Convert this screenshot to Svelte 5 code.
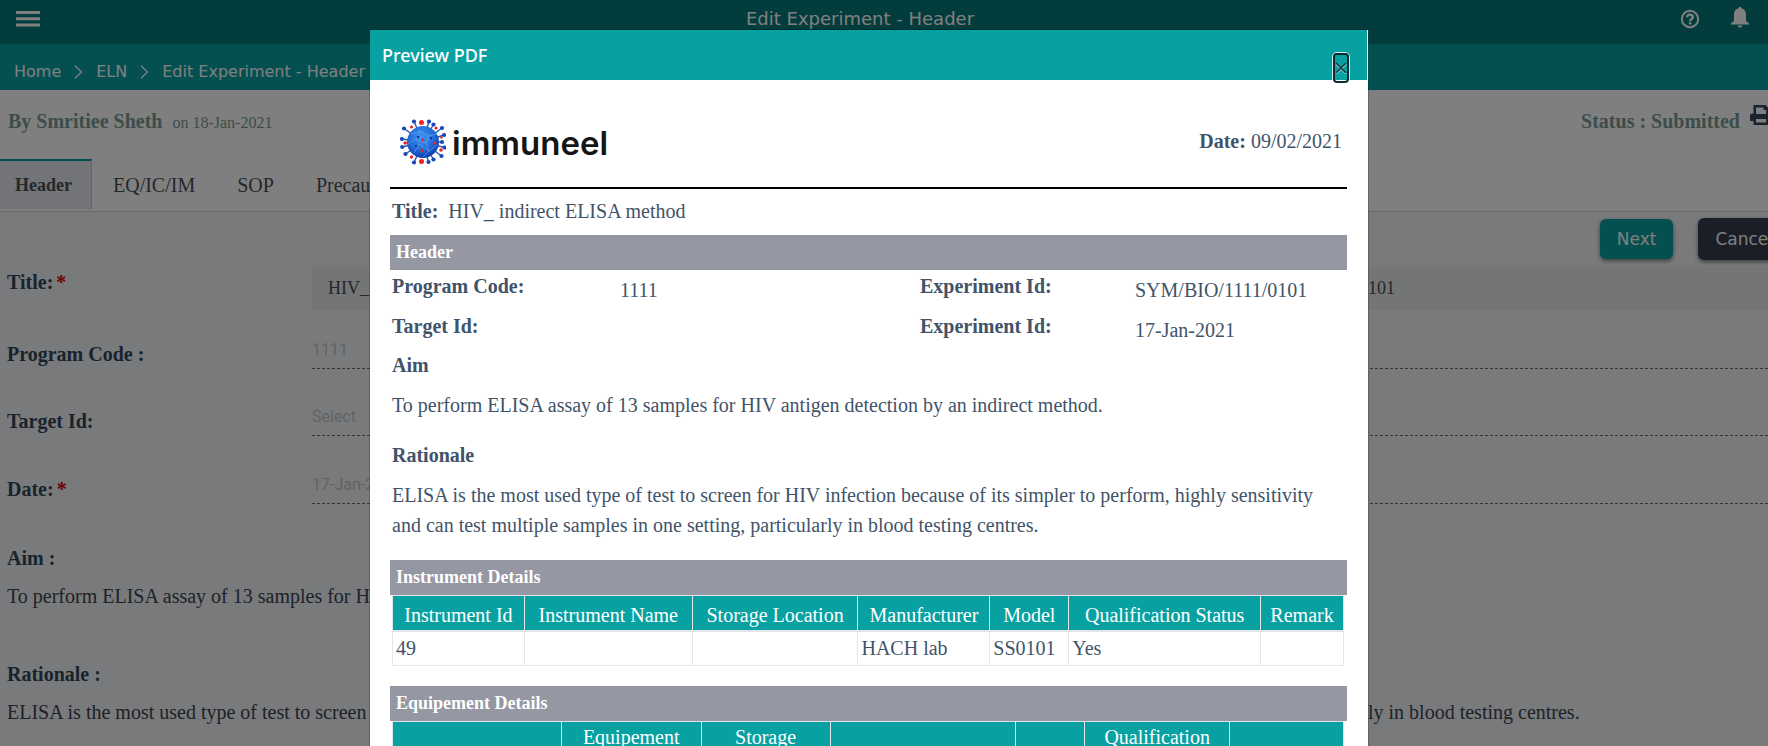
<script>
  const tabs = ['Header', 'EQ/IC/IM', 'SOP', 'Precautions'];

  const instrument = {
    widths: [132, 168, 166, 132, 79, 192, 83],
    heads: ['Instrument Id', 'Instrument Name', 'Storage Location', 'Manufacturer', 'Model', 'Qualification Status', 'Remark'],
    row: ['49', '', '', 'HACH lab', 'SS0101', 'Yes', '']
  };
  const equipment = {
    widths: [169, 140, 129, 186, 69, 145, 114],
    heads: ['Equipement Id', 'Equipement Name', 'Storage Location', 'Manufacturer', 'Model', 'Qualification Status', 'Remark']
  };

  const spikes = [
    [14, 2.5], [29, 2.5], [4, 9.5], [33.5, 5.5], [42, 9], [2, 20], [44, 16], [42, 23],
    [2.2, 28], [44.5, 28.5], [5.5, 35], [41.5, 37], [14, 43.5], [28.5, 43], [33.5, 40.5]
  ];
  const redDots = [
    [21.5, 3.5, 2.5], [21.5, 42.5, 2.5], [11.5, 8, 1.6], [36, 9, 1.6], [5.2, 24, 1.8],
    [41, 31, 1.8], [11.5, 38, 1.7], [41.5, 18.5, 1.2], [22.5, 21, 1.4], [35, 24, 1.5], [22, 31.5, 1.4]
  ];
</script>

<div class="page">
  <header class="topbar">
    <button class="icon" aria-label="Menu">
      <svg width="24" height="16" viewBox="0 0 24 16" fill="#fff"><path d="M0 0h24v3H0zM0 6.3h24v3H0zM0 12.6h24v3H0z" /></svg>
    </button>
    <h1>Edit Experiment - Header</h1>
    <div class="tools">
      <button class="icon" aria-label="Help">
        <svg width="20" height="20" viewBox="0 0 20 20" fill="none" stroke="#fff" stroke-width="2"><circle cx="10" cy="10" r="8.2" /><path d="M7.1 8.2c0-3.600 5.700-3.400 5.700 0 0 1.800-2.700 1.900-2.700 4" stroke-width="2.4" /><circle cx="10.1" cy="14.300" r=".7" stroke-width="1.4" /></svg>
      </button>
      <button class="icon bell" aria-label="Notifications">
        <svg width="20" height="22" viewBox="0 0 20 22" fill="#fff"><path d="M8.6 2.2a1.4 1.4 0 0 1 2.8 0C14.8 3 16 5.500 16 9v5.500c0 1.600 3.300 2 3.300 4H.7c0-2 3.300-2.400 3.300-4V9c0-3.500 1.200-6 4.600-6.800zM7.700 19.500h4.600a2.300 2 0 0 1-4.600 0z" /></svg>
      </button>
    </div>
  </header>

  <nav class="crumbs" aria-label="Breadcrumb">
    <a href="#home">Home</a>
    <svg width="9" height="14" viewBox="0 0 9 14" fill="none" stroke="#fff" stroke-width="1.3"><path d="M1 .8 7.500 7 1 13.200" /></svg>
    <a href="#eln">ELN</a>
    <svg width="9" height="14" viewBox="0 0 9 14" fill="none" stroke="#fff" stroke-width="1.3"><path d="M1 .8 7.500 7 1 13.200" /></svg>
    <span>Edit Experiment - Header</span>
  </nav>

  <div class="byline">
    <p><b>By Smritiee Sheth</b> <small>on 18-Jan-2021</small></p>
    <div class="status">
      <b>Status : Submitted</b>
      <button class="icon" aria-label="Print">
        <svg width="22" height="20" viewBox="0 0 22 20"><path fill="#34495e" fill-rule="evenodd" d="M3.500 0h12l3 3v5.500H20a2 2 0 0 1 2 2V16h-3.500v4h-15v-4H0v-5.500a2 2 0 0 1 2-2h1.500zM6 2.500V9h10V5h-2.500V2.500zM6 14v3.500h10V14z" /></svg>
      </button>
    </div>
  </div>

  <div class="tabs" role="tablist">
    {#each tabs as tab, i}
      <button role="tab" aria-selected={i === 0} class:active={i === 0}>{tab}</button>
    {/each}
  </div>

  <main>
    <div class="actions">
      <button class="next">Next</button>
      <button class="cancel">Cancel</button>
    </div>
    <div class="fields">
      <label for="title">Title:<i>*</i></label>
      <input id="title" class="filled" value="HIV_ indirect ELISA method" readonly />
      <input class="filled second" aria-label="Experiment Id" value="SYM/BIO/1111/0101" readonly />

      <label for="program">Program Code :</label>
      <input id="program" placeholder="1111" />
      <input aria-label="Program" />

      <label for="target">Target Id:</label>
      <input id="target" placeholder="Select" />
      <input aria-label="Target" />

      <label for="date">Date:<i>*</i></label>
      <input id="date" placeholder="17-Jan-2021" />
      <input aria-label="End date" />
    </div>
    <section class="note">
      <h2>Aim :</h2>
      <p>To perform ELISA assay of 13 samples for HIV antigen detection by an indirect method.</p>
    </section>
    <section class="note">
      <h2>Rationale :</h2>
      <p>ELISA is the most used type of test to screen for HIV infection because of its simpler to perform, highly sensitivity and can test multiple samples in one setting, particularly in blood testing centres.</p>
    </section>
  </main>
</div>

<div class="backdrop">
  <div class="modal" role="dialog" aria-modal="true" aria-labelledby="dialog-title">
    <div class="modal-head">
      <h2 id="dialog-title">Preview PDF</h2>
      <button class="close" aria-label="Close">
        <svg width="12" height="12" viewBox="0 0 12 12" fill="none" aria-hidden="true">
          <path d="M1 2l10 10M11 2L1 12" stroke="#b5dcde" stroke-width="1.500" />
          <path d="M1 1l10 10M11 1L1 11" stroke="#12343a" stroke-width="1.500" />
        </svg>
      </button>
    </div>
    <div class="sheet">
      <div class="brand">
        <div class="logo">
          <svg width="46" height="46" viewBox="0 0 46 46" aria-hidden="true">
            <defs>
              <radialGradient id="ball" cx=".45" cy=".35" r=".65">
                <stop offset="0" stop-color="#3f95f2" /><stop offset=".6" stop-color="#246bd8" /><stop offset="1" stop-color="#0c3fae" />
              </radialGradient>
            </defs>
            {#each spikes as [x, y]}
              <line x1="23" y1="23" x2={x} y2={y} stroke="#2458bd" stroke-width="1.400" />
              <circle cx={x} cy={y} r="2.100" fill="#1748b8" />
            {/each}
            <circle cx="23" cy="23" r="16" fill="url(#ball)" />
            <path d="M11 15l9-3 8 5 9-2M8 25l8-5 10 4 6-7M14 34l5-9 10 7 8-6M20 12l-4 8M28 17l-2 7 3 8-6 6" fill="none" stroke="#6fb0ee" stroke-width=".7" opacity=".8" />
            <circle cx="18" cy="18" r="1.200" fill="#0b3497" /><circle cx="31" cy="19" r="1.200" fill="#0b3497" /><circle cx="16" cy="27" r="1.200" fill="#0b3497" />
            {#each redDots as [x, y, r]}
              <circle cx={x} cy={y} {r} fill="#ee2226" />
            {/each}
          </svg>
          <span>immuneel</span>
        </div>
        <p><b>Date:</b> 09/02/2021</p>
      </div>

      <p class="doc-title"><b>Title:</b> <span>HIV_ indirect ELISA method</span></p>

      <h3>Header</h3>
      <dl>
        <dt>Program Code:</dt><dd>1111</dd>
        <dt>Experiment Id:</dt><dd>SYM/BIO/1111/0101</dd>
        <dt>Target Id:</dt><dd></dd>
        <dt>Experiment Id:</dt><dd>17-Jan-2021</dd>
      </dl>
      <div class="prose">
        <h4>Aim</h4>
        <p>To perform ELISA assay of 13 samples for HIV antigen detection by an indirect method.</p>
        <h4>Rationale</h4>
        <p>ELISA is the most used type of test to screen for HIV infection because of its simpler to perform, highly sensitivity and can test multiple samples in one setting, particularly in blood testing centres.</p>
      </div>

      <h3>Instrument Details</h3>
      <table>
        <colgroup>{#each instrument.widths as w}<col style="width: {w / 9.52}%" />{/each}</colgroup>
        <thead><tr>{#each instrument.heads as h}<th>{h}</th>{/each}</tr></thead>
        <tbody><tr>{#each instrument.row as c}<td>{c}</td>{/each}</tr></tbody>
      </table>

      <h3>Equipement Details</h3>
      <table>
        <colgroup>{#each equipment.widths as w}<col style="width: {w / 9.52}%" />{/each}</colgroup>
        <thead><tr>{#each equipment.heads as h}<th>{h}</th>{/each}</tr></thead>
      </table>
    </div>
  </div>
</div>

<style>
  :global(body) { overflow: hidden; }
  * { box-sizing: border-box; }
  h1, h2, h3, h4, p, dl, dd { margin: 0; }
  button, input { font: inherit; }
  .page, .backdrop {
    font-family: 'Liberation Serif', 'Times New Roman', serif;
    font-size: 20px;
    line-height: 30px;
  }
  .page { height: 100vh; overflow: hidden; display: flex; flex-direction: column; background: #fff; color: #34495e; }
  .icon { display: flex; padding: 0; border: 0; background: none; }

  .topbar {
    height: 44px; flex: none; display: flex; align-items: center;
    padding: 0 18px 6px 16px; background: #067879; color: #fff;
  }
  .topbar h1 { flex: 1; text-align: center; font: 400 18px/24px 'DejaVu Sans', Verdana, sans-serif; }
  .tools { display: flex; align-items: center; gap: 30px; }
  .tools .bell { margin-bottom: 5px; }
  .crumbs {
    height: 46px; flex: none; display: flex; align-items: center; gap: 13px; padding: 10px 14px 0;
    background: #08a1a2; color: #fff; font: 16px/24px 'DejaVu Sans', Verdana, sans-serif; white-space: nowrap;
  }
  .crumbs a { color: inherit; text-decoration: none; }

  .byline { height: 69px; flex: none; display: flex; justify-content: space-between; padding: 16px 0 0 8px; color: #7a9a92; margin-right: -4px; }
  .byline small { font-size: 16px; margin-left: 5px; }
  .status { display: flex; gap: 10px; align-items: flex-start; }
  .status .icon { margin-top: -1px; }

  .tabs { flex: none; display: flex; height: 53px; border-bottom: 1px solid #ccd2d6; }
  .tabs button {
    height: 50px; padding: 2px 21px 0; border: 0; background: none; color: #4a5056; white-space: nowrap;
  }
  .tabs .active { padding: 0 19px 0 15px; border-top: 2px solid #08a1a2; border-right: 1px solid #c8ccd0; background: #e4e8ee; font-size: 18px; font-weight: 700; }

  main { flex: 1; padding: 6px 0 0 7px; background: #f2f4f6; min-height: 0; }
  .actions { display: flex; justify-content: flex-end; align-items: center; gap: 25px; height: 42px; margin: 0 -22px 7px 0; font-family: 'DejaVu Sans', Verdana, sans-serif; font-size: 17px; }
  .actions button { border: 0; border-radius: 6px; height: 40px; padding: 0 17px; color: #fff; line-height: 24px; box-shadow: 0 2px 4px rgba(0, 0, 0, .5); }
  .actions .next { background: #08a1a2; }
  .actions .cancel { background: #343c4c; height: 42px; }

  .fields { display: grid; grid-template-columns: 305px 1fr 1fr; grid-template-rows: 43px 59px 67px 68px; }
  .fields label { font-weight: 700; align-self: end; color: #33475a; }
  .fields label:first-child { align-self: start; }
  .fields label i { color: #e00000; font-style: normal; margin-left: 3px; }
  .fields input {
    min-width: 0; width: 100%; height: 38px; align-self: end; padding: 0; border: 0; outline: 0;
    border-bottom: 1px dashed #6a6a6a; background: none; font: 16px 'Roboto', sans-serif; color: #555;
  }
  .fields input::placeholder { color: #c4c8cb; opacity: 1; }
  .fields .filled { height: 43px; padding: 0 16px; border: 0; border-radius: 3px 0 0 3px; background: #e8eaea; font: 18px 'Liberation Serif', serif; color: #4a4f55; }
  .fields .filled.second { padding-left: 200px; border-radius: 0; }
  .note { padding-top: 48px; }
  .fields + .note { padding-top: 39px; }
  .note h2 { font-size: 20px; line-height: 30px; color: #33475a; }
  .note p { margin-top: 8px; color: #3d4450; }

  .backdrop {
    position: fixed; inset: 0; display: flex; justify-content: center; align-items: flex-start; overflow: hidden;
    padding: 29px 30px 0 0; background: rgba(0, 0, 0, .5); color: #3f546a;
  }
  .modal { width: 100%; max-width: 1000px; border: 1px solid rgba(0, 0, 0, .2); background: #fff; background-clip: padding-box; }
  .modal-head { position: relative; height: 50px; margin-right: 1px; padding: 13px 12px; background: #08a1a2; color: #fff; }
  .modal-head h2 { font: 500 18px/24px 'Noto Sans', sans-serif; }
  .close {
    position: absolute; right: 18px; top: 23px; width: 16px; height: 30px; padding: 0; border: 2px solid #102c30; border-radius: 4px;
    background: none; box-shadow: 0 0 0 1px rgba(255, 255, 255, .8); display: flex; justify-content: center; align-items: center;
  }
  .sheet { padding: 37px 21px 20px 20px; }
  .brand { display: flex; justify-content: space-between; align-items: flex-start; height: 72px; padding: 1px 5px 0 10px; border-bottom: 2px solid #000; }
  .brand p { padding-top: 8px; }
  .logo { display: flex; align-items: center; gap: 6px; color: #161616; font: 600 33px/46px 'Inter', sans-serif; }
  .logo span { padding-top: 2px; }
  .doc-title { padding: 7px 2px 9px; }
  .doc-title span { margin-left: 5px; }
  h3 { padding: 0 6px; background: #9597a3; color: #fff; font-size: 18px; line-height: 35px; }
  dl { display: grid; grid-template-columns: 228px 300px 215px 1fr; grid-auto-rows: 40px; padding-left: 2px; }
  dt { font-weight: 700; padding-top: 1px; }
  dd { padding-top: 5px; }
  .prose { padding: 0 2px 20px; }
  .prose h4 { font-size: 20px; line-height: 30px; }
  .prose p { margin: 10px 0 20px; }
  .prose p:last-child { margin-bottom: 0; }
  table { width: calc(100% - 5px); margin: 0 3px 20px 2px; border-collapse: collapse; table-layout: fixed; }
  th, td { border: 1px solid #e4e7ea; padding: 1px 3px; text-align: left; }
  th { height: 35px; padding: 2px 8px 1px; border-bottom-width: 2px; background: #08a1a2; color: #fff; font-weight: 400; line-height: 27px; text-align: center; vertical-align: bottom; }
  td { height: 35px; vertical-align: top; }
</style>
